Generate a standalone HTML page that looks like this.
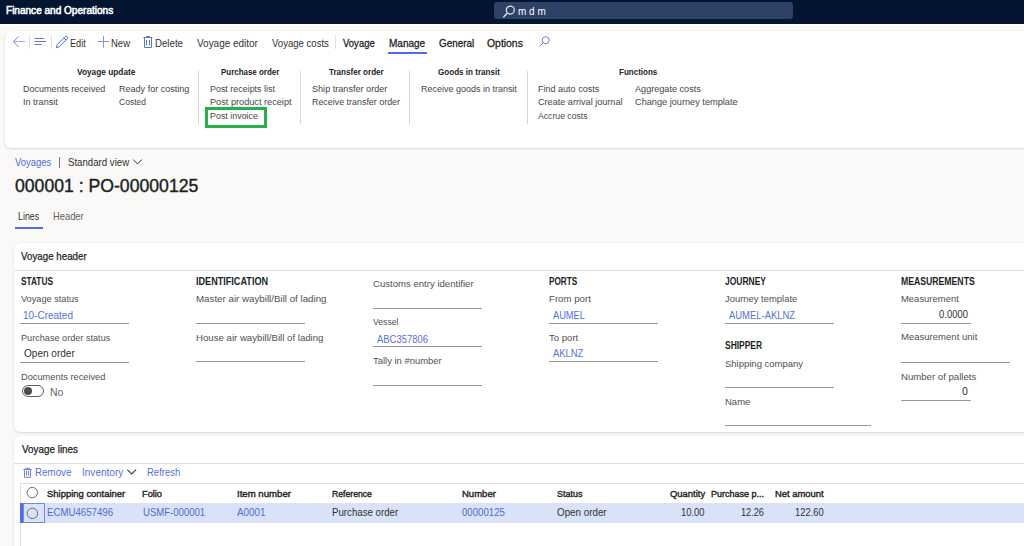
<!DOCTYPE html>
<html><head><meta charset="utf-8">
<style>
*{margin:0;padding:0;box-sizing:border-box}
html,body{width:1024px;height:546px;overflow:hidden;background:#faf9f8;font-family:"Liberation Sans",sans-serif;color:#323130}
.a{position:absolute;white-space:nowrap;line-height:1;transform-origin:0 0}
#top{position:absolute;left:0;top:0;width:1024px;height:24px;background:#041532}
#srch{position:absolute;left:494px;top:2px;width:299px;height:17px;background:#2e4166;border-radius:3px}
.card{position:absolute;background:#fff;border-radius:6px;box-shadow:0 1px 2.5px rgba(0,0,0,.13),0 0 1px rgba(0,0,0,.1)}
.sep{position:absolute;width:1px;background:#d8d6d4}
.ul{position:absolute;height:1px;background:#9a9896}
.hline{position:absolute;height:1px;background:#e1dfdd}
</style></head><body>
<div id="top"></div>
<div class="a" style="left:0;top:24px;width:1024px;height:1.5px;background:#fff"></div>
<div id="srch"></div>
<div class="a" style="left:517.5px;top:6px;font-size:10.5px;color:#fff;transform:scaleX(0.95)">m d m</div>

<!-- action pane -->
<div class="card" style="left:5px;top:31px;width:1030px;height:117px"></div>
<div class="sep" style="left:29px;top:35px;height:14px;background:#e3e1df"></div>
<div class="sep" style="left:51px;top:35px;height:14px;background:#e3e1df"></div>
<div class="sep" style="left:335px;top:35px;height:14px;background:#e3e1df"></div>
<div class="a" style="left:388px;top:52px;width:39px;height:2px;background:#4f6bed"></div>
<div class="sep" style="left:198px;top:71px;height:53px"></div>
<div class="a" style="left:205px;top:107px;width:62px;height:21px;border:3px solid #22b14c"></div>
<div class="sep" style="left:300px;top:71px;height:53px"></div>
<div class="sep" style="left:409px;top:71px;height:53px"></div>
<div class="sep" style="left:527px;top:71px;height:53px"></div>

<!-- breadcrumb & title -->
<div class="a" style="left:59px;top:157px;width:1px;height:11px;background:#797775"></div>
<div class="a" style="left:15px;top:227px;width:28px;height:2px;background:#4f6bed"></div>

<!-- voyage header card -->
<div class="card" style="left:14px;top:243px;width:1030px;height:189px"></div>
<div class="hline" style="left:14px;top:270px;width:1010px"></div>
<div class="ul" style="left:20px;top:323px;width:109px"></div>
<div class="ul" style="left:20px;top:362px;width:109px"></div>
<div class="a" style="left:22px;top:385px;width:22px;height:12px;border:1px solid #605e5c;border-radius:6px"></div>
<div class="a" style="left:24px;top:387px;width:8px;height:8px;border-radius:50%;background:#4d4b49"></div>
<div class="ul" style="left:196px;top:323px;width:109px"></div>
<div class="ul" style="left:196px;top:361px;width:109px"></div>
<div class="ul" style="left:373px;top:308px;width:109px"></div>
<div class="ul" style="left:373px;top:346px;width:109px"></div>
<div class="ul" style="left:373px;top:385px;width:109px"></div>
<div class="ul" style="left:549px;top:323px;width:109px"></div>
<div class="ul" style="left:549px;top:361px;width:109px"></div>
<div class="ul" style="left:725px;top:323px;width:109px"></div>
<div class="ul" style="left:725px;top:387px;width:109px"></div>
<div class="ul" style="left:725px;top:425px;width:146px"></div>
<div class="ul" style="left:901px;top:323px;width:70px"></div>
<div class="ul" style="left:901px;top:362px;width:109px"></div>
<div class="ul" style="left:901px;top:400px;width:70px"></div>

<!-- voyage lines card -->
<div class="card" style="left:14px;top:436px;width:1030px;height:130px"></div>
<div class="hline" style="left:14px;top:463px;width:1010px"></div>
<div class="hline" style="left:20px;top:483px;width:1004px"></div>
<div class="a" style="left:20px;top:483px;width:1px;height:63px;background:#e1dfdd"></div>
<div class="a" style="left:20px;top:503px;width:1004px;height:20px;background:#d9e2f8"></div>
<div class="a" style="left:20px;top:503px;width:3px;height:20px;background:#4f6bed"></div>
<div class="a" style="left:23px;top:503px;width:22px;height:20px;border:1px solid #6f8ae0"></div>

<svg class="a" style="left:0;top:0" width="1024" height="546" viewBox="0 0 1024 546">
<g fill="none" stroke-width="1">
 <!-- top search -->
 <circle cx="510.3" cy="10.1" r="4" stroke="#e8e9f0" stroke-width="1.2"/>
 <path d="M507.4 13 L503.3 17.2" stroke="#e8e9f0" stroke-width="1.3"/>
 <!-- back arrow -->
 <path d="M18.6 36.5 L13.4 41.7 L18.6 46.9" stroke="#6f84e2"/><path d="M13.6 41.6 H25" stroke="#8a9ae6" stroke-width="0.9"/>
 <!-- hamburger -->
 <path d="M34.5 38.5 H44 M34.5 41.5 H46 M34.5 44.5 H41.8" stroke="#6474dc"/>
 <!-- pencil -->
 <path d="M56.3 47.7 L57.3 44.5 L65.1 36.7 A1.5 1.5 0 0 1 67.3 38.9 L59.5 46.7 Z M64 37.8 L66.2 40" stroke="#5468d8"/>
 <!-- plus -->
 <path d="M103.5 36 V47.6 M97.8 41.5 H109.3" stroke="#8393e6"/>
 <!-- trash -->
 <path d="M143.4 37.5 H152.4 M146.5 37.5 V36.5 H149.5 V37.5 M144.5 37.5 V47.5 H151.5 V37.5 M146.5 40 V45.5 M149.5 40 V45.5" stroke="#5c73e0"/>
 <!-- options search -->
 <circle cx="545.7" cy="40.2" r="3.5" stroke="#6f80e2"/>
 <path d="M543.2 42.8 L539.4 46.6" stroke="#6f80e2"/>
 <!-- breadcrumb chevron -->
 <path d="M133.3 159.6 L137.5 163.9 L141.7 159.6" stroke="#323130"/>
 <!-- grid trash -->
 <path d="M23.3 469.5 H31.7 M25.5 469.5 V468.3 H29.5 V469.5 M24.5 469.5 V477.3 H30.5 V469.5 M26.5 471 V475.5 M28.5 471 V475.5" stroke="#6f84e2"/>
 <!-- inventory chevron -->
 <path d="M127.3 469.6 L131.7 474 L136.1 469.6" stroke="#3f3e3d" stroke-width="1.1"/>
 <!-- grid circles -->
 <circle cx="32.3" cy="492.6" r="5.2" stroke="#6e6c6a"/>
 <circle cx="32.4" cy="513.4" r="5.2" stroke="#6e6c6a"/>
</g>
</svg>
<div class="a" style="left:6.15px;top:5.70px;font-size:10.2px;transform:scaleX(0.9857);color:#fff;-webkit-text-stroke:0.55px #fff">Finance and Operations</div>
<div class="a" style="left:70.00px;top:37.80px;font-size:11.0px;transform:scaleX(0.8326);color:#323130">Edit</div>
<div class="a" style="left:110.56px;top:37.80px;font-size:11.0px;transform:scaleX(0.8638);color:#323130">New</div>
<div class="a" style="left:155.08px;top:37.80px;font-size:11.0px;transform:scaleX(0.8798);color:#323130">Delete</div>
<div class="a" style="left:197.08px;top:37.80px;font-size:11.0px;transform:scaleX(0.9058);color:#323130">Voyage editor</div>
<div class="a" style="left:272.44px;top:37.80px;font-size:11.0px;transform:scaleX(0.8696);color:#323130">Voyage costs</div>
<div class="a" style="left:343.34px;top:37.80px;font-size:11.0px;transform:scaleX(0.8654);color:#242424;-webkit-text-stroke:0.3px #242424">Voyage</div>
<div class="a" style="left:389.46px;top:37.80px;font-size:11.0px;transform:scaleX(0.9104);color:#242424;-webkit-text-stroke:0.3px #242424">Manage</div>
<div class="a" style="left:439.00px;top:37.80px;font-size:11.0px;transform:scaleX(0.8975);color:#242424;-webkit-text-stroke:0.3px #242424">General</div>
<div class="a" style="left:487.00px;top:37.80px;font-size:11.0px;transform:scaleX(0.9459);color:#242424;-webkit-text-stroke:0.3px #242424">Options</div>
<div class="a" style="left:77.44px;top:67.90px;font-size:8.8px;transform:scaleX(0.9426);font-weight:bold;color:#242424">Voyage update</div>
<div class="a" style="left:221.08px;top:67.90px;font-size:8.8px;transform:scaleX(0.9026);font-weight:bold;color:#242424">Purchase order</div>
<div class="a" style="left:328.92px;top:67.90px;font-size:8.8px;transform:scaleX(0.9171);font-weight:bold;color:#242424">Transfer order</div>
<div class="a" style="left:438.20px;top:67.90px;font-size:8.8px;transform:scaleX(0.9184);font-weight:bold;color:#242424">Goods in transit</div>
<div class="a" style="left:618.92px;top:67.90px;font-size:8.8px;transform:scaleX(0.9107);font-weight:bold;color:#242424">Functions</div>
<div class="a" style="left:22.54px;top:84.00px;font-size:9.6px;transform:scaleX(0.9418);color:#484644">Documents received</div>
<div class="a" style="left:118.80px;top:84.00px;font-size:9.6px;transform:scaleX(0.9419);color:#484644">Ready for costing</div>
<div class="a" style="left:22.54px;top:97.00px;font-size:9.6px;transform:scaleX(0.9440);color:#484644">In transit</div>
<div class="a" style="left:118.80px;top:97.00px;font-size:9.6px;transform:scaleX(0.8913);color:#484644">Costed</div>
<div class="a" style="left:209.92px;top:84.00px;font-size:9.6px;transform:scaleX(0.9297);color:#484644">Post receipts list</div>
<div class="a" style="left:209.92px;top:97.00px;font-size:9.6px;transform:scaleX(0.9559);color:#484644">Post product receipt</div>
<div class="a" style="left:209.92px;top:111.00px;font-size:9.6px;transform:scaleX(0.9281);color:#484644">Post invoice</div>
<div class="a" style="left:311.92px;top:84.00px;font-size:9.6px;transform:scaleX(0.9480);color:#484644">Ship transfer order</div>
<div class="a" style="left:311.92px;top:97.00px;font-size:9.6px;transform:scaleX(0.9274);color:#484644">Receive transfer order</div>
<div class="a" style="left:421.00px;top:84.00px;font-size:9.6px;transform:scaleX(0.9363);color:#484644">Receive goods in transit</div>
<div class="a" style="left:537.90px;top:84.00px;font-size:9.6px;transform:scaleX(0.9409);color:#484644">Find auto costs</div>
<div class="a" style="left:537.90px;top:97.00px;font-size:9.6px;transform:scaleX(0.9492);color:#484644">Create arrival journal</div>
<div class="a" style="left:537.90px;top:111.00px;font-size:9.6px;transform:scaleX(0.9027);color:#484644">Accrue costs</div>
<div class="a" style="left:634.90px;top:84.00px;font-size:9.6px;transform:scaleX(0.9491);color:#484644">Aggregate costs</div>
<div class="a" style="left:634.90px;top:97.00px;font-size:9.6px;transform:scaleX(0.9569);color:#484644">Change journey template</div>
<div class="a" style="left:14.54px;top:157.70px;font-size:10.2px;transform:scaleX(0.9287);color:#4f6bed">Voyages</div>
<div class="a" style="left:67.92px;top:157.70px;font-size:10.2px;transform:scaleX(0.9467);color:#323130">Standard view</div>
<div class="a" style="left:15.46px;top:178.40px;font-size:17.8px;transform:scaleX(0.9915);color:#201f1e;-webkit-text-stroke:0.4px #201f1e">000001 : PO-00000125</div>
<div class="a" style="left:17.56px;top:211.70px;font-size:10.2px;transform:scaleX(0.8681);color:#323130">Lines</div>
<div class="a" style="left:53.08px;top:211.70px;font-size:10.2px;transform:scaleX(0.9185);color:#605e5c">Header</div>
<div class="a" style="left:21.30px;top:251.05px;font-size:10.5px;transform:scaleX(0.9296);color:#242424;-webkit-text-stroke:0.25px #242424">Voyage header</div>
<div class="a" style="left:20.50px;top:276.00px;font-size:10.6px;transform:scaleX(0.7827);font-weight:bold;color:#201f1e">STATUS</div>
<div class="a" style="left:20.50px;top:293.85px;font-size:9.9px;transform:scaleX(0.9299);color:#52504e">Voyage status</div>
<div class="a" style="left:23.28px;top:310.05px;font-size:10.5px;transform:scaleX(0.9508);color:#5572e2">10-Created</div>
<div class="a" style="left:20.54px;top:332.85px;font-size:9.9px;transform:scaleX(0.9243);color:#52504e">Purchase order status</div>
<div class="a" style="left:24.00px;top:348.05px;font-size:10.5px;transform:scaleX(0.9549);color:#323130">Open order</div>
<div class="a" style="left:20.54px;top:371.85px;font-size:9.9px;transform:scaleX(0.9378);color:#52504e">Documents received</div>
<div class="a" style="left:50.00px;top:387.05px;font-size:10.5px;color:#6a6866">No</div>
<div class="a" style="left:196.08px;top:276.00px;font-size:10.6px;transform:scaleX(0.8580);font-weight:bold;color:#201f1e">IDENTIFICATION</div>
<div class="a" style="left:196.08px;top:293.85px;font-size:9.9px;transform:scaleX(0.9867);color:#52504e">Master air waybill/Bill of lading</div>
<div class="a" style="left:196.08px;top:332.85px;font-size:9.9px;transform:scaleX(0.9757);color:#52504e">House air waybill/Bill of lading</div>
<div class="a" style="left:373.10px;top:278.85px;font-size:9.9px;transform:scaleX(0.9696);color:#52504e">Customs entry identifier</div>
<div class="a" style="left:372.80px;top:316.85px;font-size:9.9px;transform:scaleX(0.8766);color:#52504e">Vessel</div>
<div class="a" style="left:376.92px;top:334.05px;font-size:10.5px;transform:scaleX(0.9002);color:#5572e2">ABC357806</div>
<div class="a" style="left:373.00px;top:355.85px;font-size:9.9px;transform:scaleX(0.9556);color:#52504e">Tally in #number</div>
<div class="a" style="left:549.00px;top:276.00px;font-size:10.6px;transform:scaleX(0.7742);font-weight:bold;color:#201f1e">PORTS</div>
<div class="a" style="left:549.00px;top:293.85px;font-size:9.9px;transform:scaleX(0.9777);color:#52504e">From port</div>
<div class="a" style="left:552.92px;top:310.05px;font-size:10.5px;transform:scaleX(0.8821);color:#5572e2">AUMEL</div>
<div class="a" style="left:549.00px;top:332.85px;font-size:9.9px;transform:scaleX(0.9690);color:#52504e">To port</div>
<div class="a" style="left:552.92px;top:348.05px;font-size:10.5px;transform:scaleX(0.8951);color:#5572e2">AKLNZ</div>
<div class="a" style="left:725.00px;top:276.00px;font-size:10.6px;transform:scaleX(0.8005);font-weight:bold;color:#201f1e">JOURNEY</div>
<div class="a" style="left:725.00px;top:293.85px;font-size:9.9px;transform:scaleX(0.9537);color:#52504e">Journey template</div>
<div class="a" style="left:729.20px;top:310.05px;font-size:10.5px;transform:scaleX(0.8983);color:#5572e2">AUMEL-AKLNZ</div>
<div class="a" style="left:725.00px;top:340.00px;font-size:10.6px;transform:scaleX(0.7971);font-weight:bold;color:#201f1e">SHIPPER</div>
<div class="a" style="left:725.00px;top:358.85px;font-size:9.9px;transform:scaleX(0.9605);color:#52504e">Shipping company</div>
<div class="a" style="left:725.00px;top:396.85px;font-size:9.9px;transform:scaleX(0.9631);color:#52504e">Name</div>
<div class="a" style="left:901.30px;top:276.00px;font-size:10.6px;transform:scaleX(0.8186);font-weight:bold;color:#201f1e">MEASUREMENTS</div>
<div class="a" style="left:901.00px;top:293.85px;font-size:9.9px;transform:scaleX(0.9567);color:#52504e">Measurement</div>
<div class="a" style="left:939.00px;top:309.05px;font-size:10.5px;transform:scaleX(0.9003);color:#323130">0.0000</div>
<div class="a" style="left:901.00px;top:331.85px;font-size:9.9px;transform:scaleX(0.9657);color:#52504e">Measurement unit</div>
<div class="a" style="left:901.00px;top:371.85px;font-size:9.9px;transform:scaleX(0.9723);color:#52504e">Number of pallets</div>
<div class="a" style="left:962.00px;top:386.05px;font-size:10.5px;color:#323130">0</div>
<div class="a" style="left:21.68px;top:444.05px;font-size:10.5px;transform:scaleX(0.9415);color:#242424;-webkit-text-stroke:0.25px #242424">Voyage lines</div>
<div class="a" style="left:35.02px;top:467.70px;font-size:10.2px;transform:scaleX(0.9589);color:#5670e0">Remove</div>
<div class="a" style="left:81.70px;top:467.70px;font-size:10.2px;transform:scaleX(0.9848);color:#5670e0">Inventory</div>
<div class="a" style="left:146.70px;top:467.70px;font-size:10.2px;transform:scaleX(0.9337);color:#5670e0">Refresh</div>
<div class="a" style="left:47.00px;top:488.90px;font-size:9.8px;transform:scaleX(0.9639);color:#242424;-webkit-text-stroke:0.4px #242424">Shipping container</div>
<div class="a" style="left:141.54px;top:488.90px;font-size:9.8px;transform:scaleX(0.9420);color:#242424;-webkit-text-stroke:0.4px #242424">Folio</div>
<div class="a" style="left:236.92px;top:488.90px;font-size:9.8px;transform:scaleX(0.9816);color:#242424;-webkit-text-stroke:0.4px #242424">Item number</div>
<div class="a" style="left:332.00px;top:488.90px;font-size:9.8px;transform:scaleX(0.8833);color:#242424;-webkit-text-stroke:0.4px #242424">Reference</div>
<div class="a" style="left:461.92px;top:488.90px;font-size:9.8px;transform:scaleX(0.9713);color:#242424;-webkit-text-stroke:0.4px #242424">Number</div>
<div class="a" style="left:556.92px;top:488.90px;font-size:9.8px;transform:scaleX(0.9131);color:#242424;-webkit-text-stroke:0.4px #242424">Status</div>
<div class="a" style="left:669.50px;top:488.90px;font-size:9.8px;transform:scaleX(0.9619);color:#242424;-webkit-text-stroke:0.4px #242424">Quantity</div>
<div class="a" style="left:710.90px;top:488.90px;font-size:9.8px;transform:scaleX(0.9188);color:#242424;-webkit-text-stroke:0.4px #242424">Purchase p...</div>
<div class="a" style="left:774.50px;top:488.90px;font-size:9.8px;transform:scaleX(0.9611);color:#242424;-webkit-text-stroke:0.4px #242424">Net amount</div>
<div class="a" style="left:46.66px;top:507.70px;font-size:10.2px;transform:scaleX(0.9482);color:#4f6ad8">ECMU4657496</div>
<div class="a" style="left:142.50px;top:507.70px;font-size:10.2px;transform:scaleX(0.9379);color:#4f6ad8">USMF-000001</div>
<div class="a" style="left:237.00px;top:507.70px;font-size:10.2px;transform:scaleX(0.9669);color:#4f6ad8">A0001</div>
<div class="a" style="left:332.00px;top:507.70px;font-size:10.2px;transform:scaleX(0.9505);color:#323130">Purchase order</div>
<div class="a" style="left:462.00px;top:507.70px;font-size:10.2px;transform:scaleX(0.9469);color:#4f6ad8">00000125</div>
<div class="a" style="left:557.00px;top:507.70px;font-size:10.2px;transform:scaleX(0.9632);color:#323130">Open order</div>
<div class="a" style="left:680.56px;top:507.70px;font-size:10.2px;transform:scaleX(0.9247);color:#323130">10.00</div>
<div class="a" style="left:741.00px;top:507.70px;font-size:10.2px;transform:scaleX(0.9015);color:#323130">12.26</div>
<div class="a" style="left:794.80px;top:507.70px;font-size:10.2px;transform:scaleX(0.9206);color:#323130">122.60</div>
</body></html>
